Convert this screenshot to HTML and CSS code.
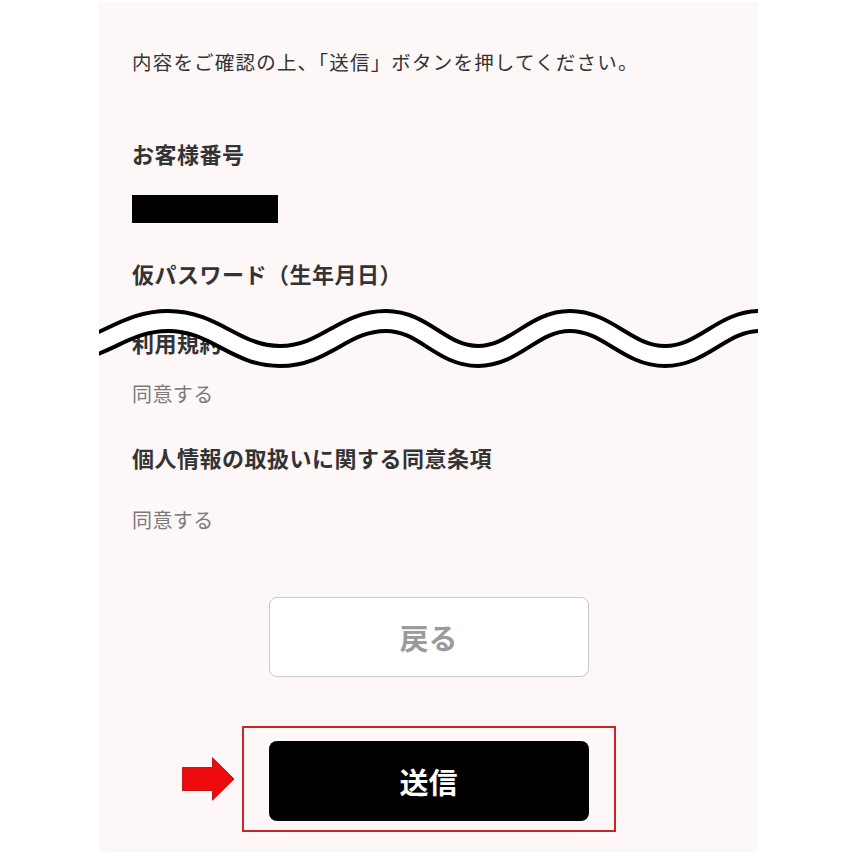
FILE: index.html
```html
<!DOCTYPE html>
<html lang="ja">
<head>
<meta charset="utf-8">
<title>確認</title>
<link rel="stylesheet" href="styles.css">
</head>
<body>
<main class="panel">
  <p class="intro">内容をご確認の上、「送信」ボタンを押してください。</p>
  <dl class="fields">
    <dt class="label first">お客様番号</dt>
    <dd class="value"><span class="redact"></span></dd>
    <dt class="label">仮パスワード（生年月日）</dt>
    <dt class="label after-cut">利用規約</dt>
    <dd class="value agree">同意する</dd>
    <dt class="label">個人情報の取扱いに関する同意条項</dt>
    <dd class="value agree last">同意する</dd>
  </dl>
  <div class="actions">
    <button class="btn back" type="button">戻る</button>
    <div class="highlight">
      <svg class="arrow" width="53" height="44" viewBox="0 0 53 44" aria-hidden="true">
        <polygon points="0.5,10.5 30.5,10.5 30.5,0.8 52,22 30.5,43.2 30.5,33.5 0.5,33.5" fill="#ee0a0f" stroke="#c4161b" stroke-width="1"/>
      </svg>
      <button class="btn send" type="button">送信</button>
    </div>
  </div>
  <svg class="wave" width="659" height="100" viewBox="99 290 659 100" aria-hidden="true">
    <path d="M 40 356 C 100 356, 120 321, 168 321 C 215 321, 235 356, 280 356 C 325 356, 343 321, 386 321 C 424 321, 441 356, 478 356 C 515 356, 533 321, 570 321 C 608 321, 627 356, 665 356 C 703 356, 722 321, 760 321 C 800 321, 820 356, 860 356" fill="none" stroke="#000" stroke-width="24"/>
    <path d="M 40 356 C 100 356, 120 321, 168 321 C 215 321, 235 356, 280 356 C 325 356, 343 321, 386 321 C 424 321, 441 356, 478 356 C 515 356, 533 321, 570 321 C 608 321, 627 356, 665 356 C 703 356, 722 321, 760 321 C 800 321, 820 356, 860 356" fill="none" stroke="#fff" stroke-width="16"/>
  </svg>
</main>
</body>
</html>
```

FILE: styles.css
```css
* { box-sizing: border-box; }
html, body { margin: 0; padding: 0; background: #fff; }
body {
  font-family: "Noto Sans CJK JP", "Noto Sans", sans-serif;
  color: #333;
}
.panel {
  position: relative;
  width: 659px;
  height: 850px;
  margin: 2px 0 0 99px;
  padding: 45px 0 0 33px;
  background: #fdf7f7;
  overflow: hidden;
  display: flex;
  flex-direction: column;
}
.intro {
  margin: 0;
  font-size: 19.5px;
  line-height: 30px;
  color: #333;
  letter-spacing: 1.2px;
}
.fields { margin: 0; padding: 0; }
.label {
  margin: 32px 0 0;
  font-size: 22px;
  line-height: 32px;
  font-weight: 700;
  color: #333;
  letter-spacing: 0.5px;
}
.label.first { margin-top: 60px; }
.label.after-cut { margin-top: 37px; }
.value {
  margin: 26px 0 0;
  font-size: 20px;
  line-height: 30px;
  height: 30px;
  letter-spacing: 0.4px;
}
.value.agree { color: #7a7a7a; margin-top: 21px; }
.value.last { margin-top: 32px; }
.redact {
  display: block;
  width: 146px;
  height: 28px;
  background: #000;
}
.actions {
  margin: 62px 0 0 -33px;
  display: flex;
  flex-direction: column;
  align-items: center;
}
.btn {
  width: 320px;
  height: 80px;
  border-radius: 8px;
  font-family: "Noto Sans CJK JP", "Noto Sans", sans-serif;
  font-size: 29px;
  font-weight: 700;
  padding: 0;
  cursor: pointer;
}
.back {
  background: #fff;
  border: 1.5px solid #c9c9c9;
  color: #9b9b9b;
}
.highlight {
  position: relative;
  margin-top: 49px;
  width: 374px;
  padding: 13px 0 9px;
  border: 2.5px solid #c8262b;
  display: flex;
  justify-content: center;
}
.send {
  background: #000;
  border: none;
  color: #fff;
}
.arrow {
  position: absolute;
  right: calc(100% + 9px);
  top: 29px;
}
.wave {
  position: absolute;
  left: 0;
  top: 288px;
}
```
